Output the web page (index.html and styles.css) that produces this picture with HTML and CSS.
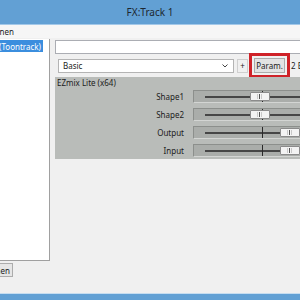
FILE: index.html
```html
<!DOCTYPE html>
<html lang="de">
  <head>
    <meta charset="UTF-8" />
    <meta name="viewport" content="width=device-width, initial-scale=1.0" />
    <title>FX:Track 1</title>
    <link rel="stylesheet" href="styles.css">
  </head>
  <body>
    <div class="window">
      <div class="titlebar">FX:Track 1</div>
      <div class="menubar">
        <div class="menu-item"><span>Optionen</span></div>
      </div>
      <div class="main">
        <div class="side">
          <div class="fx-list">
            <div class="fx-item selected"><span>VST: EZmix Lite (Toontrack)</span></div>
          </div>
          <div class="side-buttons">
            <button class="btn clipped"><span>Entfernen</span></button>
          </div>
        </div>
        <div class="content">
          <input class="name-field" type="text" />
          <div class="toolbar">
            <div class="select">
              <span>Basic</span>
              <svg width="6" height="4" viewBox="0 0 6 4"><path d="M0.5 0.5 L3 3 L5.5 0.5" fill="none" stroke="#444" stroke-width="1"/></svg>
            </div>
            <button class="btn plus">+</button>
            <button class="btn param">Param.</button>
            <span class="io">2 Eingänge</span>
          </div>
          <div class="plugin">
            <div class="plugin-name">EZmix Lite (x64)</div>
            <div class="params">
              <label>Shape1</label>
              <div class="slider"><span class="thumb" style="left: 56px"></span></div>
              <label>Shape2</label>
              <div class="slider"><span class="thumb" style="left: 56px"></span></div>
              <label>Output</label>
              <div class="slider"><span class="thumb" style="left: 86px"></span></div>
              <label>Input</label>
              <div class="slider"><span class="thumb" style="left: 86px"></span></div>
            </div>
          </div>
        </div>
      </div>
      <div class="frame-bottom"></div>
    </div>
  </body>
</html>
```

FILE: styles.css
```css
* {
  box-sizing: border-box;
}
body {
  margin: 0;
  width: 300px;
  height: 300px;
  overflow: hidden;
  background: #f0f0f0;
  color: #1b1b1b;
  font-family: "Noto Sans", "Open Sans", sans-serif;
  font-size: 8px;
}
.window {
  height: 300px;
  display: flex;
  flex-direction: column;
  overflow: hidden;
}
.titlebar {
  height: 25px;
  flex: none;
  display: flex;
  align-items: center;
  justify-content: center;
  background: #62a0d4;
  border-bottom: 1px solid #a3c8e8;
  color: #1d2731;
  font-size: 10px;
}
.menubar {
  height: 13px;
  flex: none;
  display: flex;
  align-items: center;
  background: #f6f6f6;
}
.menu-item {
  width: 14px;
  overflow: hidden;
  display: flex;
  justify-content: flex-end;
  white-space: nowrap;
}
.main {
  flex: 1;
  display: flex;
  min-height: 0;
}
.side {
  width: 50px;
  flex: none;
  display: flex;
  flex-direction: column;
  padding-top: 1px;
}
.fx-list {
  height: 222px;
  padding-top: 1px;
  background: #fff;
  border-right: 1px solid #a0a0a0;
  border-bottom: 1px solid #a0a0a0;
}
.fx-item {
  width: 43px;
  height: 12px;
  overflow: hidden;
  display: flex;
  align-items: center;
  justify-content: flex-end;
  white-space: nowrap;
  padding-right: 2px;
}
.fx-item.selected {
  background: #3b8ede;
  color: #fff;
}
.side-buttons {
  margin-top: 2px;
  display: flex;
}
.btn {
  font: inherit;
  color: #1b1b1b;
  background: #e6e6e6;
  border: 1px solid #acacac;
  padding: 0;
  height: 14px;
}
.btn.clipped {
  width: 13px;
  border-left: none;
  overflow: hidden;
  display: flex;
  align-items: center;
  justify-content: flex-end;
  white-space: nowrap;
  padding-right: 2px;
}
.content {
  flex: 1;
  min-width: 0;
  margin-left: 5px;
  padding-top: 2px;
  display: flex;
  flex-direction: column;
}
.name-field {
  height: 14px;
  width: 100%;
  margin: 0;
  border: 1px solid #abadb3;
  border-right: none;
  background: #fff;
}
.toolbar {
  height: 23px;
  display: flex;
  align-items: center;
  padding-left: 3px;
  white-space: nowrap;
}
.toolbar > * {
  flex: none;
}
.select {
  width: 176px;
  height: 14px;
  display: flex;
  align-items: center;
  justify-content: space-between;
  padding: 0 5px 0 4px;
  background: #fff;
  border: 1px solid #b4b4b4;
}
.btn.plus {
  width: 11px;
  margin-left: 3px;
  background: #f0f0f0;
  border-color: #cfcfcf;
}
.btn.param {
  width: 31px;
  height: 15px;
  margin-left: 6px;
  background: #e3e3e3;
  outline: 3px solid #cf2228;
  outline-offset: 2px;
}
.io {
  margin-left: 6px;
}
.plugin {
  height: 82px;
  background: #b9bcb9;
}
.plugin-name {
  height: 12px;
  line-height: 12px;
  padding-left: 2px;
}
.params {
  margin-top: 1px;
  display: grid;
  grid-template-columns: 129px 138px;
  column-gap: 9px;
  row-gap: 5px;
}
.params label {
  height: 13px;
  line-height: 13px;
  text-align: right;
}
.slider {
  position: relative;
  height: 13px;
  background: #aaadaa;
  border: 1px solid #8c8f8c;
  border-bottom-color: #d3d5d3;
  border-right: none;
}
.slider::before {
  content: "";
  position: absolute;
  left: 11px;
  right: 11px;
  top: 5px;
  height: 2px;
  background: #464646;
}
.slider::after {
  content: "";
  position: absolute;
  left: 68px;
  top: 0;
  bottom: 0;
  width: 1px;
  background: #2a2a2a;
}
.thumb {
  position: absolute;
  top: 1px;
  width: 20px;
  height: 9px;
  background: #f3f3f3;
  border: 1px solid #8b8b8b;
  border-radius: 1px;
  z-index: 1;
}
.thumb::after {
  content: "";
  position: absolute;
  left: 8px;
  top: 1px;
  bottom: 1px;
  width: 1px;
  background: #555;
  box-shadow: -2px 0 0 #c8c8c8, 2px 0 0 #c8c8c8;
}
.frame-bottom {
  height: 7px;
  flex: none;
  background: #62a0d4;
  border-top: 1px solid #c6ddf0;
}
```
